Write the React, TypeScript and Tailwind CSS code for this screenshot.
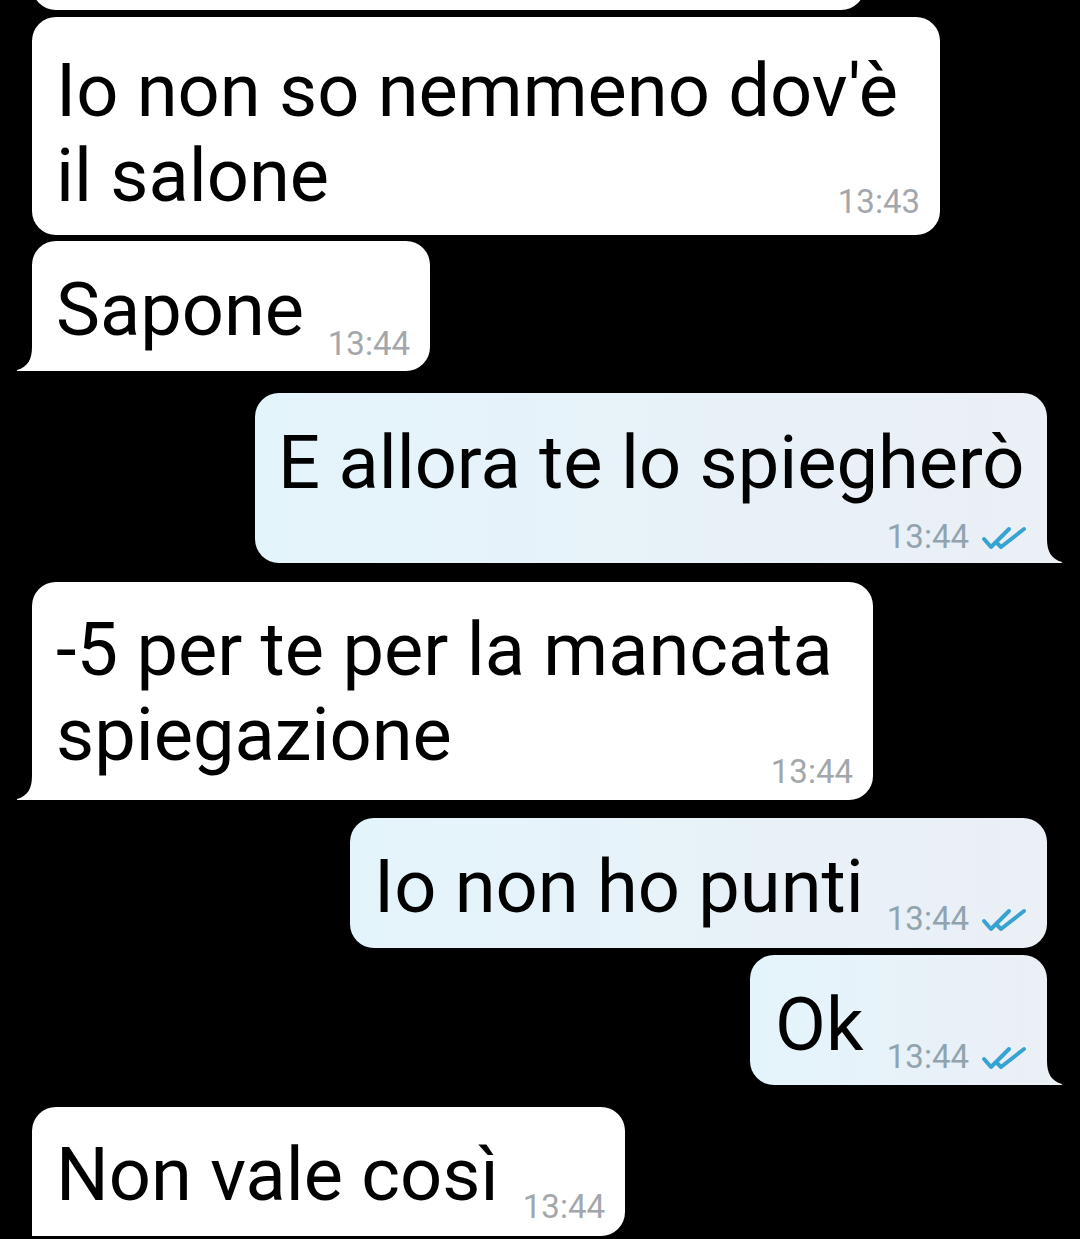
import React from "react";

const Checks = () => (
  <svg width="46" height="24" viewBox="0 0 46 24" fill="none" className="ml-[12px] mb-[5px]">
    <path d="M3 13 L10 21 L28 3" stroke="#36a3d2" strokeWidth="4" strokeLinecap="round" strokeLinejoin="round" />
    <path d="M16 17 L20 21 L43 3" stroke="#36a3d2" strokeWidth="4" strokeLinecap="round" strokeLinejoin="round" />
  </svg>
);

const InTail = () => (
  <svg width="20" height="24" viewBox="0 0 20 24" className="absolute left-[-16px] bottom-0">
    <path d="M16 0 C16 12 12 20 1 23 Q0 24 2 24 L20 24 L20 0 Z" fill="#ffffff" />
  </svg>
);

const OutTail = () => (
  <svg width="20" height="24" viewBox="0 0 20 24" className="absolute right-[-16px] bottom-0">
    <path d="M4 0 C4 12 8 20 19 23 Q20 24 18 24 L0 24 L0 0 Z" fill="#ebeff6" />
  </svg>
);

const msg = "text-[74px] leading-[85px] text-black whitespace-nowrap";
const tIn = "text-[33px] leading-[36px] text-[#a3a7ab] whitespace-nowrap";
const tOut = "text-[33px] leading-[36px] text-[#91a4ae] whitespace-nowrap";
const outBg = "bg-linear-to-r from-[#e4f4fb] to-[#ebeff6]";

export default function App() {
  return (
    <div
      className="w-[1080px] h-[1239px] bg-black overflow-hidden flex flex-col"
      style={{ fontFamily: "Roboto, 'Noto Sans', sans-serif" }}
    >
      {/* partial top bubble */}
      <div className="ml-[32px] mt-[-190px] w-[833px] h-[200px] shrink-0 bg-white rounded-[24px]" />

      {/* B1 */}
      <div className="ml-[32px] mt-[7px] w-[908px] shrink-0 bg-white rounded-[24px] flex flex-col pl-[24px] pr-[20px] pt-[31px] pb-[15px]">
        <div className={msg}>
          Io non so nemmeno dov'è
          <br />
          il salone
        </div>
        <div className={`self-end mt-[-34px] ${tIn}`}>13:43</div>
      </div>

      {/* B2 */}
      <div className="relative ml-[32px] mt-[6px] w-[398px] shrink-0 bg-white rounded-[24px] rounded-bl-none flex items-end justify-between pl-[24px] pr-[20px] pt-[26px] pb-[19px]">
        <span className={msg}>Sapone</span>
        <span className={`mb-[-10px] ${tIn}`}>13:44</span>
        <InTail />
      </div>

      {/* B3 */}
      <div className={`relative self-end mr-[33px] mt-[22px] w-[792px] shrink-0 ${outBg} rounded-[24px] rounded-br-none flex flex-col pl-[23px] pr-[20px] pt-[27px] pb-[8px]`}>
        <div className={msg}>E allora te lo spiegherò</div>
        <div className="self-end mt-[14px] flex items-end">
          <span className={tOut}>13:44</span>
          <Checks />
        </div>
        <OutTail />
      </div>

      {/* B4 */}
      <div className="relative ml-[32px] mt-[19px] w-[841px] shrink-0 bg-white rounded-[24px] rounded-bl-none flex flex-col pl-[24px] pr-[20px] pt-[25px] pb-[10px]">
        <div className={msg}>
          -5 per te per la mancata
          <br />
          spiegazione
        </div>
        <div className={`self-end mt-[-23px] ${tIn}`}>13:44</div>
        <InTail />
      </div>

      {/* B5 */}
      <div className={`self-end mr-[33px] mt-[18px] w-[697px] shrink-0 ${outBg} rounded-[24px] flex items-end justify-between pl-[24px] pr-[20px] pt-[26px] pb-[19px]`}>
        <span className={msg}>Io non ho punti</span>
        <span className="flex items-end mb-[-8px]">
          <span className={tOut}>13:44</span>
          <Checks />
        </span>
      </div>

      {/* B6 */}
      <div className={`relative self-end mr-[33px] mt-[7px] w-[297px] shrink-0 ${outBg} rounded-[24px] rounded-br-none flex items-end justify-between pl-[25px] pr-[20px] pt-[27px] pb-[18px]`}>
        <span className={msg}>Ok</span>
        <span className="flex items-end mb-[-8px]">
          <span className={tOut}>13:44</span>
          <Checks />
        </span>
        <OutTail />
      </div>

      {/* B7 */}
      <div className="ml-[32px] mt-[22px] w-[593px] shrink-0 bg-white rounded-[24px] rounded-bl-none flex items-end justify-between pl-[24px] pr-[20px] pt-[25px] pb-[19px]">
        <span className={msg}>Non vale così</span>
        <span className={`mb-[-8px] ${tIn}`}>13:44</span>
      </div>
    </div>
  );
}
